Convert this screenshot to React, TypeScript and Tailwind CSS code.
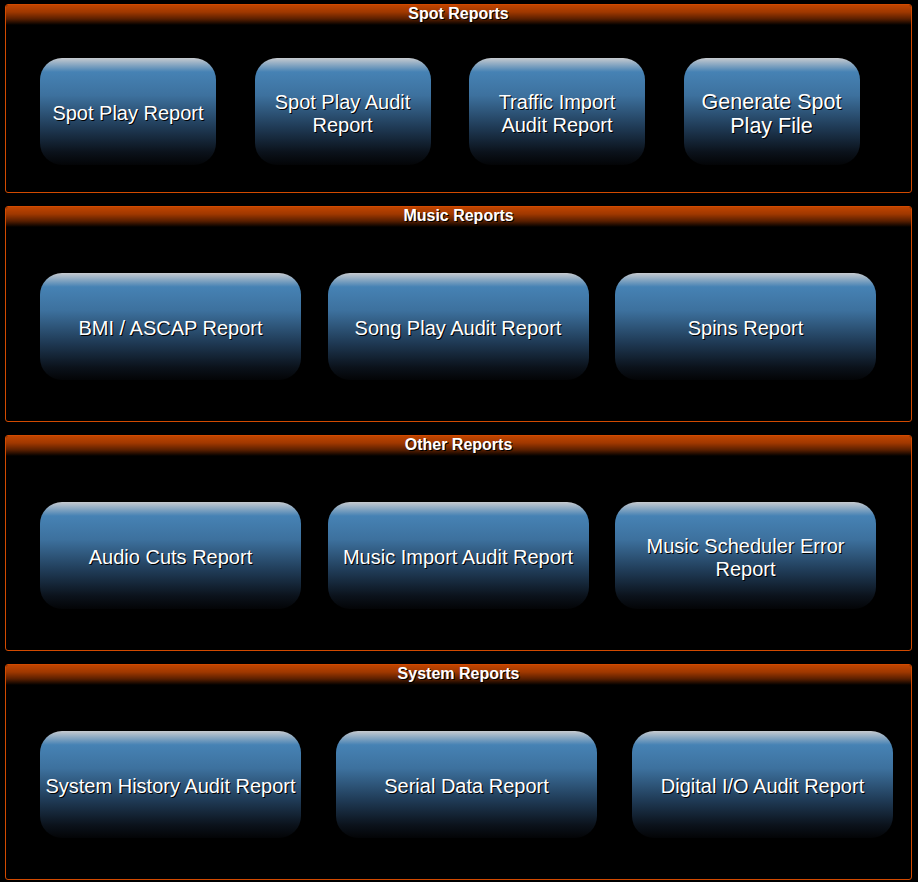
const sections = [
  {
    title: "Spot Reports",
    first: true,
    gap: "gap-[38.5px]",
    width: "w-[176px] px-3",
    items: ["Spot Play Report", "Spot Play Audit Report", "Traffic Import Audit Report", "Generate Spot Play File"],
  },
  {
    title: "Music Reports",
    gap: "gap-[26.5px]",
    width: "w-[261px] px-1",
    items: ["BMI / ASCAP Report", "Song Play Audit Report", "Spins Report"],
  },
  {
    title: "Other Reports",
    gap: "gap-[26.5px]",
    width: "w-[261px] px-1",
    items: ["Audio Cuts Report", "Music Import Audit Report", "Music Scheduler Error Report"],
  },
  {
    title: "System Reports",
    gap: "gap-[35px]",
    width: "w-[261px] px-1",
    items: ["System History Audit Report", "Serial Data Report", "Digital I/O Audit Report"],
  },
];

function ReportButton({ label, width }: { label: string; width: string }) {
  // the generate button is drawn with a slightly bigger label
  const big = label.startsWith("Generate");
  return (
    <button
      className={`${width} h-[107px] shrink-0 rounded-[22px] pt-[4px] flex items-center justify-center text-center text-white [text-shadow:1px_1px_0_#000] bg-[linear-gradient(to_bottom,#c6cacf_0%,#4682b4_13%,#3d719e_35%,#1f3a55_65%,#0b121b_88%,#030406_100%)] ${big ? "text-[21.5px] leading-[24px]" : "text-[20px] leading-[23px]"}`}
    >
      {label}
    </button>
  );
}

export default function App() {
  return (
    <div className="w-[918px] h-[882px] bg-black pl-[5px] pr-[6px] pt-[4px] flex flex-col gap-[13px] font-['Liberation_Sans',Arial,sans-serif]">
      {sections.map((s) => (
        <div key={s.title} className="border border-[#d24a00] rounded-[3px] overflow-hidden">
          <div className="h-[20px] pb-[2px] flex items-center justify-center text-[16px] font-bold text-white [text-shadow:1px_1px_0_#000] bg-[linear-gradient(to_bottom,#c04400_0%,#a03800_35%,#5a1f00_70%,#000_100%)]">
            {s.title}
          </div>
          <div className={`flex pl-[34px] ${s.gap} ${s.first ? "pt-[33px] pb-[27px]" : "pt-[46px] pb-[41px]"}`}>
            {s.items.map((it) => (
              <ReportButton key={it} label={it} width={s.width} />
            ))}
          </div>
        </div>
      ))}
    </div>
  );
}
